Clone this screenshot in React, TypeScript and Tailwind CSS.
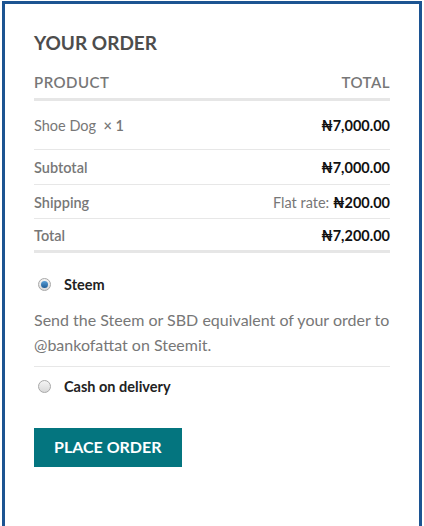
import React from 'react';

const font = { fontFamily: 'Lato, "Open Sans", sans-serif' };

const Radio: React.FC<{ checked?: boolean }> = ({ checked }) => (
  <span className="w-[13px] h-[13px] rounded-full border border-[#a8a8a8] bg-gradient-to-b from-[#f4f4f4] to-[#d9d9d9] flex items-center justify-center shrink-0">
    {checked && <span className="w-[7px] h-[7px] rounded-full bg-gradient-to-b from-[#5aa0d8] to-[#1e5c96]" />}
  </span>
);

export default function App() {
  return (
    <div className="w-[424px] h-[526px] bg-white overflow-hidden" style={font}>
      <div className="ml-[2px] mt-[1px] w-[420px] h-[560px] border-[3px] border-[#1c5492] px-[29px] pt-[27px]">
        <h3 className="text-[19px] leading-[23px] font-bold text-[#4d4d4d] uppercase">Your Order</h3>

        <div className="mt-[19px] flex justify-between items-center pb-[7px] border-b-[3px] border-[#e6e6e6] text-[15px] leading-[18px] font-semibold text-[#777] tracking-[0.5px]">
          <span>PRODUCT</span>
          <span>TOTAL</span>
        </div>

        <div className="h-[49px] pt-[2px] flex justify-between items-center border-b border-[#e7e7e7] text-[14.5px]">
          <span className="text-[#777]">Shoe Dog <strong className="font-semibold">&nbsp;× 1</strong></span>
          <span className="font-bold text-[#111]">₦7,000.00</span>
        </div>
        <div className="h-[35px] pt-[2px] flex justify-between items-center border-b border-[#e7e7e7] text-[14.5px]">
          <span className="font-semibold text-[#777]">Subtotal</span>
          <span className="font-bold text-[#111]">₦7,000.00</span>
        </div>
        <div className="h-[34px] pt-[2px] flex justify-between items-center border-b border-[#e7e7e7] text-[14.5px]">
          <span className="font-semibold text-[#777]">Shipping</span>
          <span className="text-[#777]">Flat rate: <span className="font-bold text-[#111]">₦200.00</span></span>
        </div>
        <div className="h-[34px] pt-[2px] flex justify-between items-center border-b-[3px] border-[#e6e6e6] text-[14.5px]">
          <span className="font-semibold text-[#777]">Total</span>
          <span className="font-bold text-[#111]">₦7,200.00</span>
        </div>

        <div className="mt-[21px] flex items-center gap-[13px] pl-[4px]">
          <Radio checked />
          <span className="text-[14.5px] font-bold text-[#222]">Steem</span>
        </div>
        <p className="mt-[11px] text-[16px] leading-[25px] text-[#777] pb-[9px] border-b border-[#e7e7e7]">
          Send the Steem or SBD equivalent of your order to @bankofattat on Steemit.
        </p>
        <div className="mt-[9px] flex items-center gap-[13px] pl-[4px]">
          <Radio />
          <span className="text-[14.5px] font-bold text-[#222]">Cash on delivery</span>
        </div>

        <button className="mt-[30px] h-[39px] px-[20px] bg-[#04757f] text-white text-[16px] font-bold uppercase">
          Place Order
        </button>
      </div>
    </div>
  );
}
